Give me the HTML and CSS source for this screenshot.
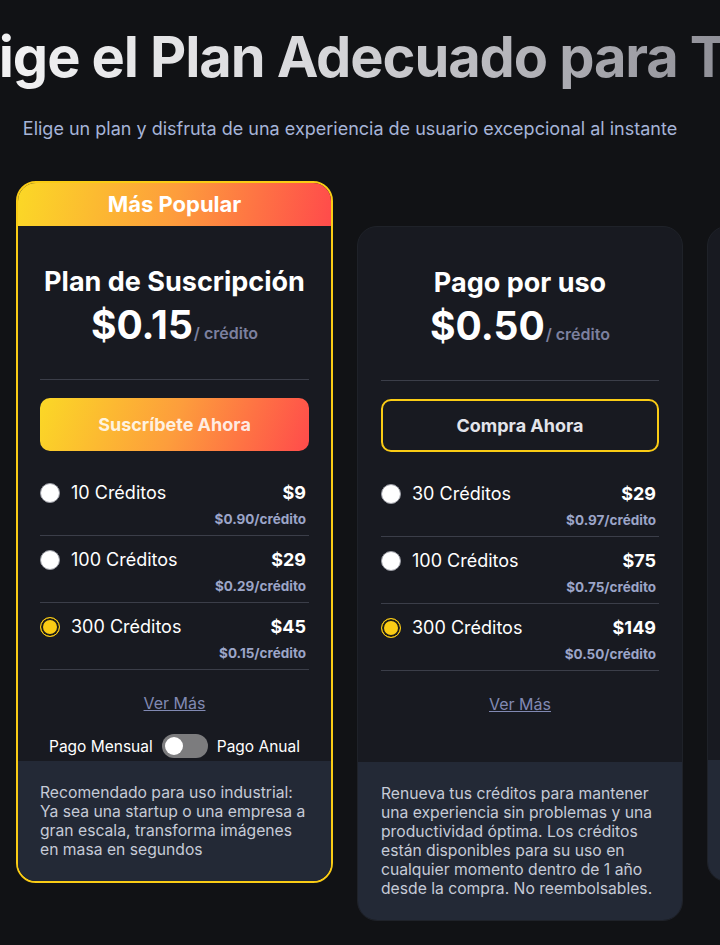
FILE: index.html
```
<!DOCTYPE html>
<html lang="es">
<head>
<meta charset="utf-8">
<title>Planes</title>
<link rel="stylesheet" href="styles.css">
</head>
<body>
<header class="hero">
  <div class="title-wrap"><h1 class="title">Elige el Plan Adecuado para Ti</h1></div>
  <p class="subtitle">Elige un plan y disfruta de una experiencia de usuario excepcional al instante</p>
</header>
<main class="cards">
  <section class="card popular">
    <div class="badge">Más Popular</div>
    <div class="card-body">
      <h2 class="plan-name">Plan de Suscripción</h2>
      <div class="price"><span class="amount">$0.15</span><span class="unit">/ crédito</span></div>
      <hr class="divider">
      <button class="btn btn-grad">Suscríbete Ahora</button>
      <ul class="options">
        <li class="option"><div class="opt-main"><span class="radio"></span><span class="opt-name">10 Créditos</span><span class="opt-price">$9</span></div><div class="opt-sub">$0.90/crédito</div></li>
        <li class="option"><div class="opt-main"><span class="radio"></span><span class="opt-name">100 Créditos</span><span class="opt-price">$29</span></div><div class="opt-sub">$0.29/crédito</div></li>
        <li class="option"><div class="opt-main"><span class="radio checked"></span><span class="opt-name">300 Créditos</span><span class="opt-price">$45</span></div><div class="opt-sub">$0.15/crédito</div></li>
      </ul>
      <a class="more" href="#">Ver Más</a>
      <div class="toggle-row">
        <span>Pago Mensual</span>
        <span class="toggle"><span class="knob"></span></span>
        <span>Pago Anual</span>
      </div>
    </div>
    <div class="card-foot">Recomendado para uso industrial: Ya sea una startup o una empresa a gran escala, transforma imágenes en masa en segundos</div>
  </section>

  <section class="card plain">
    <div class="card-body">
      <h2 class="plan-name">Pago por uso</h2>
      <div class="price"><span class="amount">$0.50</span><span class="unit">/ crédito</span></div>
      <hr class="divider">
      <button class="btn btn-outline">Compra Ahora</button>
      <ul class="options">
        <li class="option"><div class="opt-main"><span class="radio"></span><span class="opt-name">30 Créditos</span><span class="opt-price">$29</span></div><div class="opt-sub">$0.97/crédito</div></li>
        <li class="option"><div class="opt-main"><span class="radio"></span><span class="opt-name">100 Créditos</span><span class="opt-price">$75</span></div><div class="opt-sub">$0.75/crédito</div></li>
        <li class="option"><div class="opt-main"><span class="radio checked"></span><span class="opt-name">300 Créditos</span><span class="opt-price">$149</span></div><div class="opt-sub">$0.50/crédito</div></li>
      </ul>
      <a class="more" href="#">Ver Más</a>
      <div class="toggle-space"></div>
    </div>
    <div class="card-foot">Renueva tus créditos para mantener una experiencia sin problemas y una productividad óptima. Los créditos están disponibles para su uso en cualquier momento dentro de 1 año desde la compra. No reembolsables.</div>
  </section>

  <section class="card plain third" aria-hidden="true">
    <div class="card-body"></div>
    <div class="card-foot"></div>
  </section>
</main>
</body>
</html>
```
FILE: styles.css
```
* { box-sizing: border-box; }
html, body { margin: 0; padding: 0; }
body {
  background: #111215;
  font-family: Inter, "Noto Sans", sans-serif;
  color: #ffffff;
  overflow: hidden;
  width: 720px;
  height: 945px;
}
.hero { padding-top: 22px; }
.title-wrap {
  display: flex;
  justify-content: center;
  width: 692px;
}
.title {
  flex: none;
  margin: 0;
  white-space: nowrap;
  font-size: 56px;
  font-weight: 700;
  line-height: 70px;
  letter-spacing: -1.1px;
  background: linear-gradient(90deg, #f5f5f6 0%, #d9d9dc 45%, #8d8d95 100%);
  -webkit-background-clip: text;
  background-clip: text;
  color: transparent;
}
.subtitle {
  margin: 25px 0 0;
  width: 700px;
  text-align: center;
  font-size: 18px;
  line-height: 24px;
  color: #a6b4d8;
}
.cards {
  display: flex;
  align-items: flex-start;
  gap: 24px;
  padding-left: 16px;
  margin-top: 40px;
}
.card {
  flex: none;
  border-radius: 20px;
  overflow: hidden;
  background: #181a21;
}
.popular {
  width: 317px;
  border: 2px solid #facc15;
}
.plain {
  width: 326px;
  border: 1px solid #1f2229;
  margin-top: 45px;
}
.third {
  width: 317px;
  display: flex;
  flex-direction: column;
}
.third .card-body { height: 533px; }
.third .card-foot { height: 121px; }
.badge {
  height: 43px;
  background: linear-gradient(100deg, #fbd826 0%, #fd9d3c 50%, #ff4b4b 100%);
  text-align: center;
  font-size: 22px;
  font-weight: 700;
  line-height: 43px;
  color: #ffffff;
}
.card-body {
  padding: 40px 22px 3px;
  text-align: center;
}
.plain .card-body { padding: 40px 23px 3px; }
.plan-name {
  margin: 0;
  font-size: 27px;
  font-weight: 700;
  line-height: 32px;
}
.price {
  height: 54px;
  display: flex;
  justify-content: center;
  align-items: baseline;
}
.amount {
  font-size: 39px;
  font-weight: 700;
  line-height: 54px;
}
.unit {
  margin-left: 1px;
  font-size: 16px;
  font-weight: 600;
  color: #7c809f;
}
.divider {
  margin: 27px 0 0;
  border: 0;
  border-top: 1px solid #3b3e49;
  height: 0;
}
.btn {
  display: block;
  width: 100%;
  height: 53px;
  margin-top: 18px;
  border-radius: 10px;
  font-family: inherit;
  font-size: 18px;
  font-weight: 700;
}
.btn-grad {
  border: 0;
  background: linear-gradient(110deg, #fbd826 0%, #fd9d3c 50%, #ff4b4b 100%);
  color: rgba(255, 255, 255, 0.86);
}
.btn-outline {
  border: 2px solid #facc15;
  background: transparent;
  color: #e3e4ea;
}
.options {
  list-style: none;
  margin: 18px 0 0;
  padding: 0;
  text-align: left;
}
.option {
  padding: 12px 3px 7px 0;
  border-bottom: 1px solid #3b3e49;
}
.opt-main {
  display: flex;
  align-items: center;
  height: 24px;
}
.radio {
  width: 20px;
  height: 20px;
  border-radius: 50%;
  background: #ffffff;
  border: 1px solid #9a9ca4;
  flex: none;
}
.radio.checked {
  background: #facc15;
  border: 1.5px solid #facc15;
  box-shadow: inset 0 0 0 2px #1d1c17;
}
.opt-name {
  margin-left: 11px;
  font-size: 18px;
  line-height: 24px;
  flex: 1;
}
.opt-price {
  font-size: 18px;
  font-weight: 700;
  line-height: 24px;
}
.opt-sub {
  margin-top: 5px;
  text-align: right;
  font-size: 13.5px;
  font-weight: 700;
  line-height: 18px;
  color: #9ca5c8;
}
.more {
  display: inline-block;
  margin-top: 23px;
  font-size: 16px;
  line-height: 20px;
  color: #8189b3;
  text-decoration: underline;
}
.toggle-row {
  margin-top: 21px;
  display: flex;
  justify-content: center;
  align-items: center;
  gap: 9px;
  height: 24px;
  font-size: 15.5px;
  color: #ffffff;
}
.toggle-space { margin-top: 21px; height: 24px; }
.toggle {
  width: 46px;
  height: 24px;
  border-radius: 12px;
  background: #7c7c7e;
  padding: 3px;
  display: flex;
}
.knob {
  width: 18px;
  height: 18px;
  border-radius: 50%;
  background: #ffffff;
}
.card-foot {
  background: #232936;
  padding: 22px 22px 22px;
  font-size: 15.7px;
  line-height: 19px;
  color: #c6cbd7;
}
.plain .card-foot { padding: 22px 23px 22px; }
```
